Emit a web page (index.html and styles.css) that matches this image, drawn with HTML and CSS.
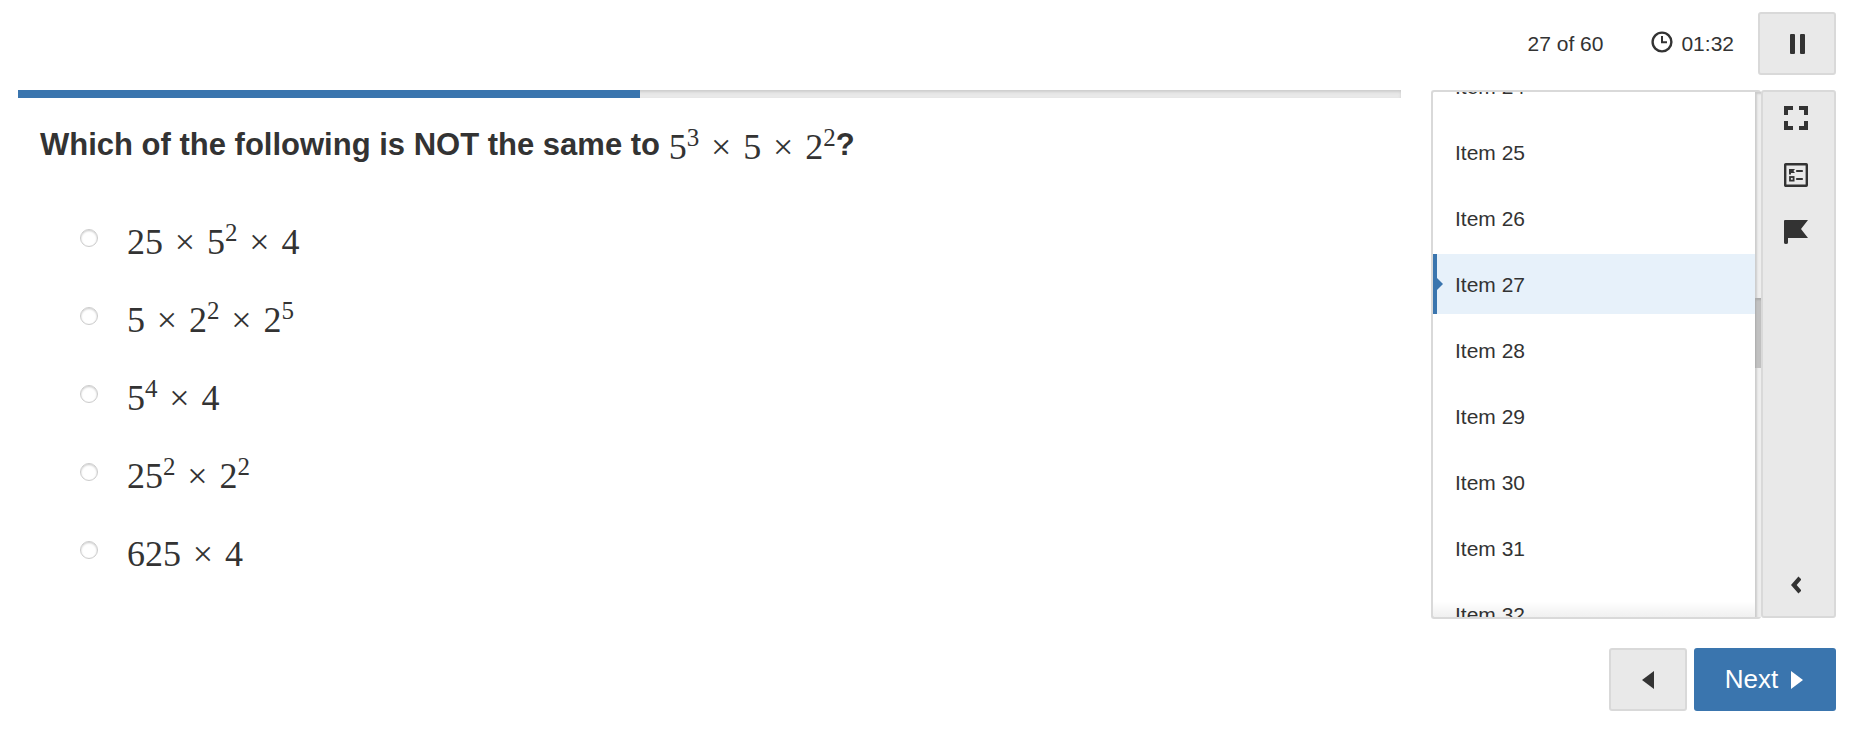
FILE: index.html
```html
<!DOCTYPE html>
<html lang="en">
<head>
  <meta charset="UTF-8" />
  <meta name="viewport" content="width=device-width, initial-scale=1.0"/>
  <title>Item 27</title>
  <link rel="stylesheet" href="styles.css">
</head>
<body>

  <header class="top-bar">
    <span class="progress-text">27 of 60</span>
    <span class="timer">
      <svg class="clock" viewBox="0 0 22 22" width="22" height="22" fill="none" stroke="currentColor">
        <circle cx="11" cy="11" r="9.4" stroke-width="2.4"/>
        <path d="M11 5v6.2h5" stroke-width="2"/>
      </svg>
      <span>01:32</span>
    </span>
    <button class="btn" type="button" aria-label="Pause">
      <svg viewBox="0 0 15 20" width="15" height="20" fill="currentColor">
        <rect x="0" y="0" width="5" height="20" rx="1"/>
        <rect x="10" y="0" width="5" height="20" rx="1"/>
      </svg>
    </button>
  </header>

  <main class="content">
    <section class="question-area">
      <div class="progress"><div class="progress-fill" style="width: 45%"></div></div>

      <form class="question">
        <h1 id="stimulus">Which of the following is NOT the same to <span class="math">5<sup>3</sup><i>×</i>5<i>×</i>2<sup>2</sup></span>?</h1>

        <div class="options" role="radiogroup" aria-labelledby="stimulus">
          <label class="option"><input type="radio" name="answer" value="1"><span class="math">25<i>×</i>5<sup>2</sup><i>×</i>4</span></label>
          <label class="option"><input type="radio" name="answer" value="2"><span class="math">5<i>×</i>2<sup>2</sup><i>×</i>2<sup>5</sup></span></label>
          <label class="option"><input type="radio" name="answer" value="3"><span class="math">5<sup>4</sup><i>×</i>4</span></label>
          <label class="option"><input type="radio" name="answer" value="4"><span class="math">25<sup>2</sup><i>×</i>2<sup>2</sup></span></label>
          <label class="option"><input type="radio" name="answer" value="5"><span class="math">625<i>×</i>4</span></label>
        </div>
      </form>
    </section>

    <aside class="side">
      <nav class="item-nav">
        <ul class="item-list" id="itemList"></ul>
        <div class="scroll-track"><div class="scroll-thumb" id="scrollThumb"></div></div>
      </nav>

      <div class="toolbar">
        <button class="tool" type="button" aria-label="Fullscreen">
          <svg viewBox="0 0 24 24" width="24" height="24" fill="none" stroke="currentColor" stroke-width="4">
            <path d="M2 9V2h7M15 2h7v7M22 15v7h-7M9 22H2v-7"/>
          </svg>
        </button>
        <button class="tool" type="button" aria-label="Review screen">
          <svg viewBox="0 0 24 24" width="24" height="24" fill="none" stroke="currentColor">
            <rect x="1.2" y="1.2" width="21.6" height="21.6" rx="0.5" stroke-width="2.4"/>
            <path d="M5 6h6l-1.6 2L11 10H7v1.500H5z" fill="currentColor" stroke="none"/>
            <path d="M13 8h5M13 16h5" stroke-width="2.2" stroke-linecap="round"/>
            <rect x="6" y="14" width="3.6" height="3.6" stroke-width="1.8"/>
          </svg>
        </button>
        <button class="tool" type="button" aria-label="Flag item">
          <svg viewBox="0 0 24 24" width="24" height="24" fill="currentColor">
            <path d="M0 1q0-1 1-1h23l-7 9 7 9H4v4.500q0 1.500-2 1.500t-2-1.500z"/>
          </svg>
        </button>
        <button class="tool tool-collapse" type="button" aria-label="Expand toolbar">
          <svg viewBox="0 0 10 18" width="10" height="18" fill="none" stroke="currentColor" stroke-width="4.200">
            <path d="M9 2L2.800 9 9 16"/>
          </svg>
        </button>
      </div>
    </aside>
  </main>

  <footer class="bottom-bar">
    <button class="btn" type="button" aria-label="Previous">
      <svg viewBox="0 0 12 18" width="12" height="18" fill="currentColor"><path d="M12 0v18L0 9z"/></svg>
    </button>
    <button class="btn btn-next" type="button">
      Next
      <svg viewBox="0 0 12 18" width="12" height="18" fill="currentColor"><path d="M0 0l12 9L0 18z"/></svg>
    </button>
  </footer>

  <script>
    const TOTAL = 60;
    const CURRENT = 27;
    const list = document.getElementById('itemList');
    const thumb = document.getElementById('scrollThumb');

    for (let i = 1; i <= TOTAL; i++) {
      const active = i === CURRENT ? ' class="active" aria-current="true"' : '';
      list.innerHTML += `<li><a href="#item${i}"${active}>Item ${i}</a></li>`;
    }

    // Keep the thumb in step with the list
    function updateThumb() {
      thumb.style.height = (list.clientHeight / list.scrollHeight * 100) + '%';
      thumb.style.top = (list.scrollTop / list.scrollHeight * 100) + '%';
    }

    // Bring the current item into the upper part of the list
    const current = list.querySelector('.active');
    list.scrollTop = current.offsetTop - list.offsetTop - 162;
    list.addEventListener('scroll', updateThumb);
    window.addEventListener('resize', updateThumb);
    updateThumb();
  </script>

</body>
</html>
```

FILE: styles.css
```css
* {
  box-sizing: border-box;
}

body {
  display: flex;
  flex-direction: column;
  height: 100vh;
  min-height: 600px;
  margin: 0;
  padding: 12px 24px 35px 18px;
  font-family: "Liberation Sans", Arial, sans-serif;
  font-size: 21px;
  color: #333;
  background-color: #fff;
}

button {
  padding: 0;
  font-family: inherit;
  color: inherit;
  cursor: pointer;
}

svg {
  display: block;
}

.top-bar {
  display: flex;
  justify-content: flex-end;
  align-items: center;
}

.progress-text {
  margin-right: 48px;
}

.timer {
  display: flex;
  align-items: center;
  gap: 8px;
  margin-right: 24px;
}

.clock {
  margin-bottom: 4px;
}

.btn {
  display: flex;
  justify-content: center;
  align-items: center;
  width: 78px;
  height: 63px;
  border: 2px solid #d9d9d9;
  border-radius: 3px;
  background-color: #e9e9e9;
}

.content {
  display: flex;
  flex: 1;
  gap: 30px;
  min-height: 0;
  margin: 15px 0 29px;
}

.question-area {
  flex: 1;
}

.progress {
  height: 8px;
  background-color: #e9e9e9;
  box-shadow: inset 0 2px 3px #ccc;
}

.progress-fill {
  height: 100%;
  background-color: #3a75ae;
}

.question {
  padding: 24px 22px;
}

h1 {
  margin: 0;
  font-size: 31px;
  line-height: 46px;
}

.math {
  font-family: "Liberation Serif", "Times New Roman", serif;
  font-size: 36px;
  font-weight: normal;
  line-height: 36px;
  white-space: nowrap;
}

h1 .math {
  vertical-align: -4px;
}

.math i {
  display: inline-block;
  width: 28px;
  margin: 0 8px;
  font-style: normal;
  text-align: center;
}

.math sup {
  font-size: 25px;
  line-height: 0;
  vertical-align: 13px;
}

.options {
  margin-top: 35px;
  padding-left: 40px;
}

.option {
  display: flex;
  align-items: center;
  gap: 29px;
  height: 78px;
}

.option input {
  appearance: none;
  width: 18px;
  height: 18px;
  margin: 0 0 8px;
  border: 1px solid #ccc;
  border-radius: 50%;
  background-color: #fff;
  box-shadow: inset 0 1px 2px #ccc;
}

.option input:checked {
  border: 5px solid #3a75ae;
}

.side {
  display: flex;
  width: 405px;
}

.item-nav {
  position: relative;
  display: flex;
  flex: 1;
  border: 2px solid #d9d9d9;
  border-right: 0;
  border-radius: 3px;
}

/* fade over the last visible item */
.item-nav::after {
  content: "";
  position: absolute;
  left: 0;
  right: 6px;
  bottom: 0;
  height: 16px;
  background: linear-gradient(rgba(0, 0, 0, 0), rgba(0, 0, 0, 0.06));
  pointer-events: none;
}

.item-list {
  flex: 1;
  margin: 0;
  padding: 0;
  list-style: none;
  overflow-y: auto;
  scrollbar-width: none;
}

.item-list li {
  padding-bottom: 6px;
}

.item-list a {
  position: relative;
  display: block;
  padding: 2px 0 0 22px;
  line-height: 58px;
  color: #333;
  text-decoration: none;
}

.item-list .active {
  padding-left: 18px;
  border-left: 4px solid #3a75ae;
  background-color: #e7f1fa;
}

.item-list .active::before {
  content: "";
  position: absolute;
  top: 24px;
  left: 0;
  border: 6px solid transparent;
  border-left-color: #3a75ae;
  border-right: 0;
}

.scroll-track {
  position: relative;
  width: 6px;
  background-color: #eee;
  box-shadow: inset 2px 2px 2px #ccc;
}

.scroll-thumb {
  position: absolute;
  width: 100%;
  background-color: #c1c1c1;
  box-shadow: inset 1px 2px 2px #aaa;
}

.toolbar {
  display: flex;
  flex-direction: column;
  width: 75px;
  margin-bottom: 1px;
  border: 2px solid #d9d9d9;
  border-radius: 3px;
  background-color: #e9e9e9;
}

.tool {
  display: flex;
  justify-content: center;
  align-items: center;
  height: 57px;
  border: 0;
  padding: 0 5px 5px 0;
  background: none;
}

.tool-collapse {
  margin-top: auto;
}

.bottom-bar {
  display: flex;
  justify-content: flex-end;
  gap: 7px;
}

.btn-next {
  gap: 13px;
  width: 142px;
  padding-right: 2px;
  border: 0;
  font-size: 26px;
  color: #fff;
  background-color: #3a75ae;
}
```
